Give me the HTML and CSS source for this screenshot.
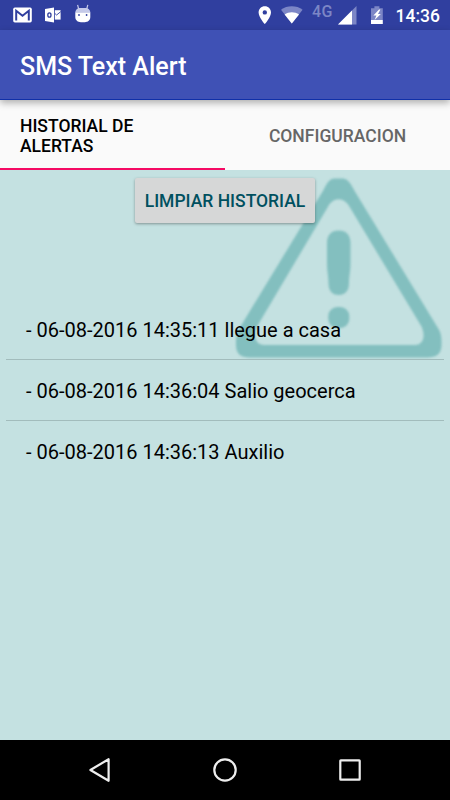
FILE: index.html
```
<!DOCTYPE html>
<html lang="es">
<head>
  <meta charset="UTF-8">
  <meta name="viewport" content="width=device-width, initial-scale=1.0">
  <title>SMS Text Alert</title>
  <link rel="stylesheet" href="styles.css">
</head>
<body>
  <div class="status-bar">
    <!-- Notificaciones -->
    <svg class="status-icons" width="110" height="30" viewBox="0 0 110 30">
      <rect x="13.2" y="7.6" width="18.6" height="14.8" rx="1.6" fill="#fff"/>
      <path d="M16.2 20.4V10.8L22.5 15.8L28.8 10.8V20.4" fill="none" stroke="#303f9f" stroke-width="2"/>
      <path d="M45 9L54 7.5V22.5L45 21Z" fill="#fff"/>
      <path d="M54.8 10.2H60.6V19.6H54.8Z" fill="#fff"/>
      <path d="M54.8 13.4L56.6 15L60.8 11.6" fill="none" stroke="#303f9f" stroke-width="0.9"/>
      <ellipse cx="49.4" cy="15" rx="1.6" ry="2.2" fill="none" stroke="#303f9f" stroke-width="1.3"/>
      <path d="M77.6 4.8L78.8 9.5M87.8 4.8L86.6 9.5" stroke="#c5cae9" stroke-width="1.2"/>
      <path d="M75.3 12.8C75.3 10 77.5 8 80 8H85.6C88.1 8 90.3 10 90.3 12.8Z" fill="#c5cae9"/>
      <path d="M75.3 12.5H90.3V17C90.3 20.2 87.8 22.2 84.8 22.2H80.8C77.8 22.2 75.3 20.2 75.3 17Z" fill="#fff"/>
      <circle cx="79" cy="15" r="0.9" fill="#303f9f"/>
      <circle cx="86.6" cy="15" r="0.9" fill="#303f9f"/>
    </svg>
    <div class="status-right">
      <svg width="60" height="30" viewBox="255 0 60 30">
        <path fill-rule="evenodd" d="M264.8 6.2C261.3 6.2 258.6 8.9 258.6 12.4C258.6 17 264.8 24 264.8 24S271 17 271 12.4C271 8.9 268.3 6.2 264.8 6.2ZM264.8 10.2A2.2 2.2 0 1 1 264.8 14.6A2.2 2.2 0 1 1 264.8 10.2Z" fill="#fff"/>
        <path d="M291.8 23.5L281 9.8C287 5.2 296.6 5.2 302.6 9.8Z" fill="#7c86c6"/>
        <path d="M291.8 23.5L284.6 14.4C288.8 11.4 294.8 11.4 299 14.4Z" fill="#fff"/>
      </svg>
      <span class="network">4G</span>
      <svg width="55" height="30" viewBox="335 0 55 30">
        <path d="M338 24.5L356.5 6V24.5Z" fill="#7c86c6"/>
        <path d="M338 24.5L352 10.5V24.5Z" fill="#fff"/>
        <path d="M371 8.2H374.4V6.2H379.4V8.2H382.8V20H371Z" fill="#7c86c6"/>
        <path d="M371 20H382.8V24H371Z" fill="#fff"/>
        <path d="M379 9.4L373.4 15.6H376.4L374.6 20L380.8 14H378L380.4 9.4Z" fill="#fff"/>
      </svg>
      <span class="clock">14:36</span>
    </div>
  </div>

  <header class="toolbar">
    <h1>SMS Text Alert</h1>
  </header>

  <nav class="tabs">
    <div class="tab active">HISTORIAL DE ALERTAS</div>
    <div class="tab">CONFIGURACION</div>
  </nav>

  <main class="content">
    <!-- Marca de agua -->
    <svg class="watermark" width="225" height="200" viewBox="225 170 225 200">
      <path fill-rule="evenodd" d="M334 178.6H343C348.5 179.3 351 184.5 354 190L438.5 329C441 333 441.7 337 441.5 345C441.5 354 436 357.5 427 357.5H250C241 357.5 236 354 236 345C236 337 236.5 333 239 329L323.5 190C326.5 184.5 328.5 179.3 334 178.6ZM338.7 199.3C334 199.3 330.5 202 327.5 207.5L257 326.5C253 335 255 345 264 345H415C424 345 425.5 335 421.5 326.5L350 207.5C347 202 343 199.3 338.7 199.3Z"/>
      <path d="M338.7 230.5C346 230.5 350.5 235 350.5 243V263C350.5 272 349 276 349 283C349 291 345 295 338.7 295S328.5 291 328.5 283C328.5 276 327 272 327 263V243C327 235 331.5 230.5 338.7 230.5Z"/>
      <rect x="328.3" y="307" width="21" height="21" rx="9"/>
    </svg>

    <button class="clear-button">LIMPIAR HISTORIAL</button>

    <ul class="alert-list">
      <li>- 06-08-2016 14:35:11 llegue a casa</li>
      <li>- 06-08-2016 14:36:04 Salio geocerca</li>
      <li>- 06-08-2016 14:36:13 Auxilio</li>
    </ul>
  </main>

  <footer class="nav-bar">
    <svg width="24" height="26" viewBox="0 0 24 26"><path d="M20.6 2.2V23.8L2.4 13Z"/></svg>
    <svg width="26" height="26" viewBox="0 0 26 26"><circle cx="13" cy="13" r="10.7"/></svg>
    <svg width="24" height="26" viewBox="0 0 24 26"><rect x="2.3" y="3.3" width="19.4" height="19.4" rx="0.5"/></svg>
  </footer>
</body>
</html>
```
FILE: styles.css
```
* {
  box-sizing: border-box;
}
body {
  margin: 0;
  width: 450px;
  height: 800px;
  display: flex;
  flex-direction: column;
  overflow: hidden;
  font-family: Roboto, sans-serif;
  background-color: #c4e1e1;
}
.status-bar {
  height: 30px;
  display: flex;
  justify-content: space-between;
  background-color: #303f9f;
  color: #fff;
}
.status-right {
  display: flex;
  padding-right: 10px;
}
.network {
  width: 23px;
  margin-left: -3px;
  font-size: 16px;
  font-weight: 500;
  letter-spacing: 0.5px;
  line-height: 23px;
  color: #7c86c6;
}
.clock {
  width: 45px;
  margin-left: 5px;
  font-size: 17.5px;
  font-weight: 500;
  line-height: 32px;
  text-align: right;
}
.toolbar {
  position: relative;
  height: 70px;
  padding: 0 20px;
  display: flex;
  align-items: center;
  background-color: #3f51b5;
  border-bottom: 1px solid #1030a8;
  box-shadow: 0 3px 7px rgba(0, 0, 0, 0.3);
  color: #fff;
}
.toolbar h1 {
  margin: 4px 0 0;
  font-size: 25px;
  font-weight: 500;
}
.tabs {
  height: 70px;
  display: flex;
  background-color: #fafafa;
}
.tab {
  width: 225px;
  padding: 4px 20px 0;
  display: flex;
  align-items: center;
  justify-content: center;
  border-bottom: 2px solid transparent;
  font-size: 17.5px;
  font-weight: 500;
  line-height: 20.5px;
  color: #666;
}
.tab.active {
  padding-right: 70px;
  justify-content: flex-start;
  border-bottom-color: #f50a64;
  color: #000;
}
.content {
  position: relative;
  flex: 1;
  padding-top: 8px;
  display: flex;
  flex-direction: column;
  align-items: center;
}
.watermark {
  position: absolute;
  top: 0;
  right: 0;
  fill: #83bfbf;
  filter: blur(0.8px);
}
.clear-button {
  position: relative;
  width: 180px;
  height: 45px;
  padding: 0;
  border: none;
  border-radius: 2px;
  background-color: #d6d7d7;
  box-shadow: 0 1px 3px rgba(0, 0, 0, 0.35);
  font-family: inherit;
  font-size: 17.5px;
  font-weight: 500;
  color: #00505f;
}
.alert-list {
  position: relative;
  width: 438px;
  margin: 76px 0 0;
  padding: 0;
  list-style: none;
}
.alert-list li {
  height: 61px;
  padding: 0 20px;
  border-bottom: 1px solid #a2bcbc;
  font-size: 20px;
  line-height: 62px;
  color: #000;
}
.alert-list li:last-child {
  border-bottom: none;
}
.nav-bar {
  height: 60px;
  display: flex;
  align-items: center;
  justify-content: center;
  gap: 100px;
  background-color: #000;
}
.nav-bar svg {
  fill: none;
  stroke: #eee;
  stroke-width: 2.2;
  stroke-linejoin: round;
}
```
